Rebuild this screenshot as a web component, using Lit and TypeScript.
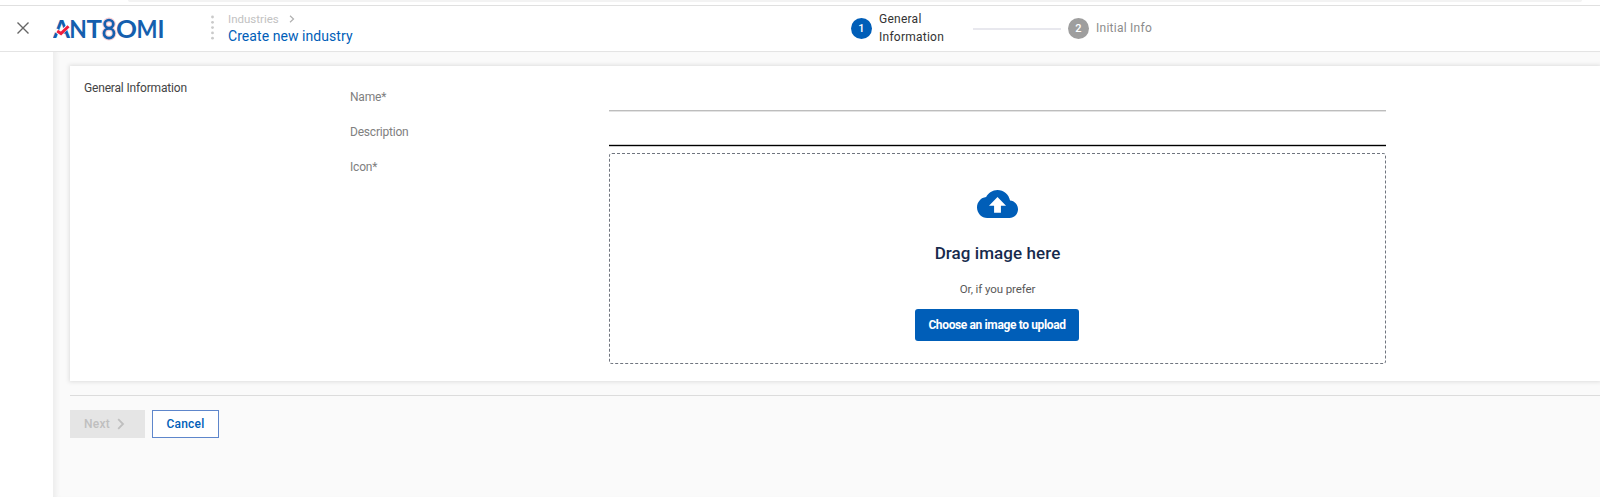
import { LitElement, html, svg, css } from "lit";
import { customElement, property } from "lit/decorators.js";

@customElement("antsomi-logo")
class AntsomiLogo extends LitElement {
  static styles = css`
    :host { display: block; width: 114px; height: 36px; }
    svg { display: block; }
    text { font: 700 25px Lato, sans-serif; fill: #155fae; }
  `;
  render() {
    const letters: [string, number, number][] = [
      ["A", 0, 17], ["N", 16.2, 17.6], ["T", 33.6, 15.5], ["O", 63, 21], ["M", 83.5, 21], ["I", 104.5, 7],
    ];
    return html`<svg width="114" height="36" viewBox="0 0 114 36" aria-label="ANTSOMI">
      ${letters.map(([c, x, w]) => svg`<text x=${x} y="27" textLength=${w} lengthAdjust="spacingAndGlyphs">${c}</text>`)}
      <path d="M2.5 19L7.5 22.5L15.5 15" fill="none" stroke="#fff" stroke-width="4.2"/>
      <path d="M4.2 20L8 22.6L15.5 15.2" fill="none" stroke="#f01f3d" stroke-width="3"/>
      <g fill="none">
        <ellipse cx="56" cy="13" rx="4.3" ry="4" stroke="#f6ccd4" stroke-width="4.8"/>
        <ellipse cx="56" cy="22.3" rx="5" ry="4.8" stroke="#f6ccd4" stroke-width="4.8"/>
        <ellipse cx="56" cy="13" rx="4.3" ry="4" stroke="#155fae" stroke-width="2.7"/>
        <ellipse cx="56" cy="22.3" rx="5" ry="4.8" stroke="#155fae" stroke-width="2.7"/>
      </g>
    </svg>`;
  }
}

@customElement("wizard-step")
class WizardStep extends LitElement {
  @property() number = "";
  @property() label = "";
  @property({ type: Boolean, reflect: true }) active = false;
  static styles = css`
    :host { display: flex; align-items: center; color: #8c8c8c; }
    :host([active]) { color: #333; }
    .dot { width: 21px; height: 21px; border-radius: 50%; background: #9e9e9e; color: #fff; font-size: 11px; font-weight: 500; line-height: 21px; text-align: center; }
    :host([active]) .dot { background: #005eb8; }
    .label { margin-left: 7px; width: 74px; font-size: 12px; line-height: 18px; letter-spacing: 0.25px; }
    :host([active]) .label { padding-bottom: 2px; }
    :host(:not([active])) .label { padding-bottom: 2px; }
  `;
  render() {
    return html`<div class="dot">${this.number}</div><div class="label">${this.label}</div>`;
  }
}

@customElement("app-root")
class AppRoot extends LitElement {
  static styles = css`
    :host { display: flex; flex-direction: column; height: 497px; overflow: hidden; background: #fff; font-family: Roboto, sans-serif; font-size: 12px; color: #595959; }
    * { box-sizing: border-box; }
    .strip { height: 5px; flex: none; }
    .tab { height: 2px; margin: 0 18px 0 128px; background: #f3f3f3; border-radius: 0 0 3px 3px; }
    header { height: 47px; flex: none; display: flex; align-items: center; border-top: 1px solid #e0e0e0; border-bottom: 1px solid #e4e4e4; }
    .close { margin-left: 16px; width: 14px; height: 14px; margin-bottom: 1px; }
    antsomi-logo { margin-left: 23px; }
    .dots { margin-left: 44px; width: 3px; height: 27px; }
    .crumbs { margin-left: 14px; width: 623px; }
    .parent { display: flex; align-items: center; height: 15px; color: #c2c2c2; font-size: 11.5px; letter-spacing: 0; }
    .parent svg { margin-left: 10px; }
    .title { height: 20px; line-height: 20px; color: #005eb8; font-size: 14px; letter-spacing: 0.06px; }
    .line { width: 88px; height: 2px; background: #e8e8ee; margin: 0 7px 0 20px; }
    .body { display: flex; flex: 1; min-height: 0; }
    .rail { width: 53px; flex: none; }
    main { flex: 1; background: #fafafa; box-shadow: inset 6px 0 5px -3px #ececec; padding: 14px 0 0 17px; }
    .card { height: 315px; background: #fff; box-shadow: 0 0 4px 1px #dedede; display: grid; grid-template-columns: 266px 259px 777px; padding-left: 14px; grid-template-rows: 45px 35px 1fr; }
    .heading { padding-top: 15px; grid-row: 1 / 4; color: #444; font-size: 12px; line-height: 15px; letter-spacing: -0.17px; }
    .label { color: #808080; font-size: 12px; line-height: 15px; letter-spacing: -0.2px; }
    .name { padding-top: 24px; }
    .desc { padding-top: 14px; }
    .icon { padding-top: 14px; }
    .field { border-bottom: 1px solid #bdbdbd; box-shadow: 0 1px #e3e3e3; }
    .field.focus { border-bottom: 1px solid #000; box-shadow: 0 1px #ccc, inset 0 -1px #ccc; }
    .drop { margin-top: 7px; height: 211px; border: 1px dashed #70757f; border-radius: 3px; display: flex; flex-direction: column; align-items: center; }
    .drop svg { margin-top: 36px; }
    .drag { margin-top: 23px; font-size: 17px; line-height: 24px; font-weight: 500; color: #172b4d; letter-spacing: 0.07px; }
    .or { margin-top: 17px; font-size: 11.5px; line-height: 14px; letter-spacing: -0.1px; }
    .choose { margin: 13px 1px 0 0; width: 164px; height: 32px; line-height: 32px; border-radius: 3px; background: #005eb8; color: #fff; text-align: center; font-weight: 700; font-size: 12px; letter-spacing: -0.37px; }
    .actions { margin-top: 14px; padding-top: 14px; border-top: 1px solid #dcdcdc; display: flex; gap: 7px; font-weight: 500; }
    .btn { height: 28px; display: flex; align-items: center; justify-content: center; }
    .next { width: 75px; background: #e5e5e5; color: #bfbfbf; gap: 7px; padding-right: 6px; letter-spacing: 0.2px; }
    .cancel { width: 67px; border: 1px solid #5e86cb; background: #fff; color: #005eb8; letter-spacing: 0.2px; }
  `;
  render() {
    return html`
      <div class="strip"><div class="tab"></div></div>
      <header>
        <svg class="close" viewBox="0 0 14 14"><path d="M1.5 1.5L12.5 12.5M12.5 1.5L1.5 12.5" stroke="#666" stroke-width="1.4"/></svg>
        <antsomi-logo></antsomi-logo>
        <svg class="dots" viewBox="0 0 3 27">${[2, 7.3, 12.6, 17.9, 23.2].map((y) => svg`<circle cx="1.5" cy=${y} r="1.4" fill="#cacaca"/>`)}</svg>
        <div class="crumbs">
          <div class="parent">Industries<svg width="6" height="8" viewBox="0 0 6 8"><path d="M1 .8L4.5 4L1 7.2" fill="none" stroke="#b0b0b0" stroke-width="1.2"/></svg></div>
          <div class="title">Create new industry</div>
        </div>
        <wizard-step number="1" label="General Information" active></wizard-step>
        <div class="line"></div>
        <wizard-step number="2" label="Initial Info"></wizard-step>
      </header>
      <div class="body">
        <div class="rail"></div>
        <main>
          <section class="card">
            <div class="heading">General Information</div>
            <div class="label name">Name*</div><div class="field"></div>
            <div class="label desc">Description</div><div class="field focus"></div>
            <div class="label icon">Icon*</div>
            <div class="drop">
              <svg width="41" height="28" viewBox="0 4 24 16" preserveAspectRatio="none"><path fill="#005eb8" d="M19.35 10.04C18.67 6.59 15.64 4 12 4 9.11 4 6.6 5.64 5.35 8.04 2.34 8.36 0 10.91 0 14c0 3.31 2.69 6 6 6h13c2.76 0 5-2.24 5-5 0-2.64-2.05-4.78-4.65-4.96zM14 13v4h-4v-4H7l5-5 5 5h-3z"/></svg>
              <div class="drag">Drag image here</div>
              <div class="or">Or, if you prefer</div>
              <div class="choose">Choose an image to upload</div>
            </div>
          </section>
          <div class="actions">
            <div class="btn next">Next<svg width="8" height="12" viewBox="0 0 8 12"><path d="M1.2 1.2L6 6L1.2 10.8" fill="none" stroke="#bfbfbf" stroke-width="1.8"/></svg></div>
            <div class="btn cancel">Cancel</div>
          </div>
        </main>
      </div>
    `;
  }
}
